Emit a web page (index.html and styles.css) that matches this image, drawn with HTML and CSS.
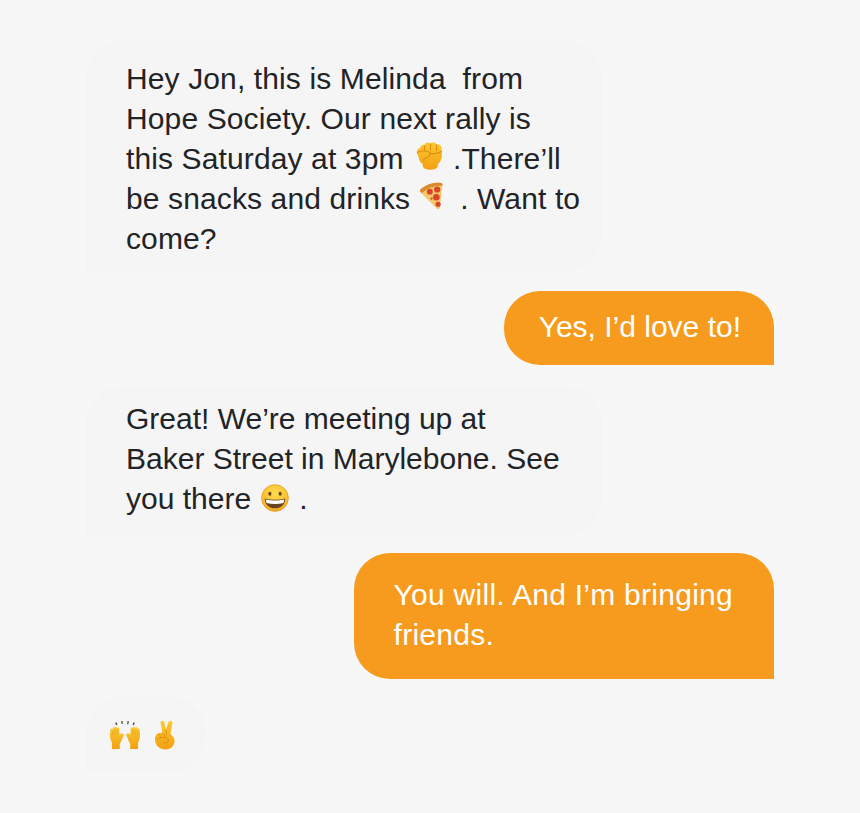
FILE: index.html
```html
<!DOCTYPE html>
<html lang="en">
<head>
<meta charset="utf-8">
<title>Chat</title>
<link rel="stylesheet" href="styles.css">
</head>
<body>
<svg class="defs" width="0" height="0" aria-hidden="true">
  <defs>
    <linearGradient id="skin" x1="0" y1="0" x2="0" y2="1">
      <stop offset="0" stop-color="#fcc92f"/>
      <stop offset="1" stop-color="#f2a012"/>
    </linearGradient>
    <radialGradient id="face" cx=".5" cy=".35" r=".7">
      <stop offset="0" stop-color="#ffdc50"/>
      <stop offset=".7" stop-color="#fac02e"/>
      <stop offset="1" stop-color="#ec9a16"/>
    </radialGradient>
  </defs>
</svg>
<main class="thread">
  <div class="bubble in first">Hey Jon, this is Melinda&nbsp; from<br>Hope Society. Our next rally is<br>this Saturday at 3pm
    <svg class="emoji fist" viewBox="0 0 27 28"><path d="M1 11C.3 8 2 6 4 6.500 4.200 3 7 2 8.500 3 9.500 0 13 0 14.500 1.500 16 0 19.500 0 20.500 2.500 23 1.500 25.500 3.500 25.500 6.500L26 12C26.300 16 24.500 20 22 22L21.500 25C20 28.500 9 28.500 7 25L6.500 22C4 20 3 18 2.500 15z" fill="url(#skin)"/><g fill="none" stroke="#dc8a10" stroke-width="1.100" stroke-linecap="round"><path d="M8.500 3.500V8M14.500 2V8M20.500 3V8.500"/><path d="M1.500 10.500C6 8 13 9 14 11 15 13.500 12 15 9.500 16 8 16.500 7.500 18 8 19"/><path d="M14.500 11.500C18 12 22 11.500 25.500 9.500"/></g></svg>
    .There’ll<br>be snacks and drinks
    <svg class="emoji pizza" viewBox="0 0 30 32"><path d="M1 9C8 3 16 0 25 1l2 2-3 27c-1 1.500-2.500 1.500-3.500.5L2 12z" fill="#f6c768"/><path d="M1.500 8.500C8 3 16 0 25 .8c2 .4 2.500 2 2.200 3.500C19 3.500 11 6 4 12c-1.500 1-3.500-1.500-2.500-3.500z" fill="#d98a2e"/><g fill="#d8432a"><circle cx="12.500" cy="11" r="3.400"/><circle cx="21" cy="8.500" r="3.600"/><circle cx="20" cy="17.500" r="3.800"/><circle cx="22" cy="25.500" r="3"/><circle cx="14.500" cy="19" r="1.300"/></g></svg>
    . Want to<br>come?</div>
  <div class="bubble out gap-a short">Yes, I’d love to!</div>
  <div class="bubble in gap-b mid">Great! We’re meeting up at<br>Baker Street in Marylebone. See<br>you there
    <svg class="emoji smile" viewBox="0 0 30 30"><circle cx="15" cy="15" r="14.300" fill="url(#face)" stroke="#e5951a" stroke-width=".8"/><ellipse cx="9.500" cy="10.500" rx="1.700" ry="2.100" fill="#6a4320"/><ellipse cx="20.500" cy="10.500" rx="1.700" ry="2.100" fill="#6a4320"/><path d="M4 15.500c7 1.800 15 1.800 22 0C26 22.500 21 26 15 26S4 22.500 4 15.500z" fill="#6a4320"/><path d="M5 16.500c6.500 1.500 13.500 1.500 20 0l-.9 3.800c-6 1.400-12.200 1.400-18.200 0z" fill="#fff"/></svg>
    .</div>
  <div class="bubble out gap-c tall">You will. And I’m bringing<br>friends.</div>
  <div class="bubble in gap-c tiny">
    <svg class="emoji hands" viewBox="0 0 32 30"><g fill="#55524c"><path d="M6 3l1.500-.8 1 2.600-1.200.4zM12 1.300l1.500-.3.400 3-1.200.1zM18.500 1l1.500.3-.7 3-1.200-.1zM24.500 2.200l1.500.8-1.300 2.200-1.200-.4z"/></g><g id="hand"><path d="M3 29L2.800 22C1.500 20 1 18 1 15L1.400 9.500C1.500 8.300 3.200 8.300 3.400 9.500L3.800 8C4 6.800 5.600 6.800 5.900 8 6.100 6.600 8 6.600 8.200 8 8.500 7 10.200 7.200 10.200 8.600L10.800 15C11.200 14 12 13.300 13 13.300L15 14.500 12.300 21 10.800 24V29z" fill="url(#skin)"/><path d="M3.600 11V15M5.900 9.500V15M8.200 9.500V15" fill="none" stroke="#e09a1a" stroke-width=".6"/></g><use href="#hand" transform="matrix(-1 0 0 1 32 0)"/></svg>
    <svg class="emoji victory" viewBox="0 0 25 30"><path d="M8.500 2.500C8.500.8 11.800.5 12.300 2.200L13.800 10 16.500 2C17 .3 20.500.8 20.500 2.800L18.500 14C21.500 16 23 19 22.500 22 22 26.500 18 29.500 13.500 29.500 8 29.500 3.500 26 3 20 2.800 17 3.300 15 6 13.500 7.500 12.800 9 12.500 10.500 13z" fill="url(#skin)"/><g fill="none" stroke="#d98d12" stroke-width=".9" stroke-linecap="round"><path d="M13.800 10L14.500 15M6.500 14C8 15 8.500 16 8.500 17.500M10.500 13C12 14 12.800 15.500 12.800 17"/><path d="M5.500 19C9 17 15 17 16.500 19.500 17.500 21.500 15 23 11.500 23"/></g></svg>
  </div>
</main>
</body>
</html>
```

FILE: styles.css
```css
* {
  box-sizing: border-box;
}

html,
body {
  margin: 0;
  height: 100%;
  background: #f7f7f7;
}

.defs {
  display: block;
  height: 0;
}

.thread {
  display: flex;
  flex-direction: column;
  padding: 40px 86px 0;
  font-family: "Liberation Sans", Arial, sans-serif;
  font-size: 30px;
  line-height: 40px;
  white-space: nowrap;
}

.bubble {
  border-radius: 36px;
}

.in {
  align-self: flex-start;
  width: 516px;
  padding-left: 40px;
  background: #f5f5f5;
  color: #222326;
  border-bottom-left-radius: 0;
}

.out {
  align-self: flex-end;
  background: #f79b1e;
  color: #fff;
  border-bottom-right-radius: 0;
}

.first {
  height: 232px;
  padding-top: 19px;
  letter-spacing: 0.12px;
}

.short {
  height: 74px;
  padding: 16px 33px 0 35px;
}

.mid {
  height: 150px;
  padding-top: 13px;
}

.tall {
  height: 126px;
  padding: 22px 41px 0 40px;
  letter-spacing: 0.27px;
}

.tiny {
  display: flex;
  align-items: flex-start;
  gap: 11px;
  width: 120px;
  height: 76px;
  padding: 24px 0 0 23px;
}

.gap-a {
  margin-top: 19px;
}

.gap-b {
  margin-top: 21px;
}

.gap-c {
  margin-top: 17px;
}

.emoji {
  display: inline-block;
  vertical-align: middle;
}

.fist {
  width: 27px;
  height: 28px;
  margin: -11px 2px 0 3.500px;
}

.pizza {
  width: 26px;
  height: 30px;
  margin: -10px 7px 0 0;
}

.smile {
  width: 28px;
  height: 28px;
  margin: -6px 2px 0 1.500px;
}

.hands {
  width: 32px;
  height: 30px;
}

.victory {
  width: 25px;
  height: 30px;
}
```
